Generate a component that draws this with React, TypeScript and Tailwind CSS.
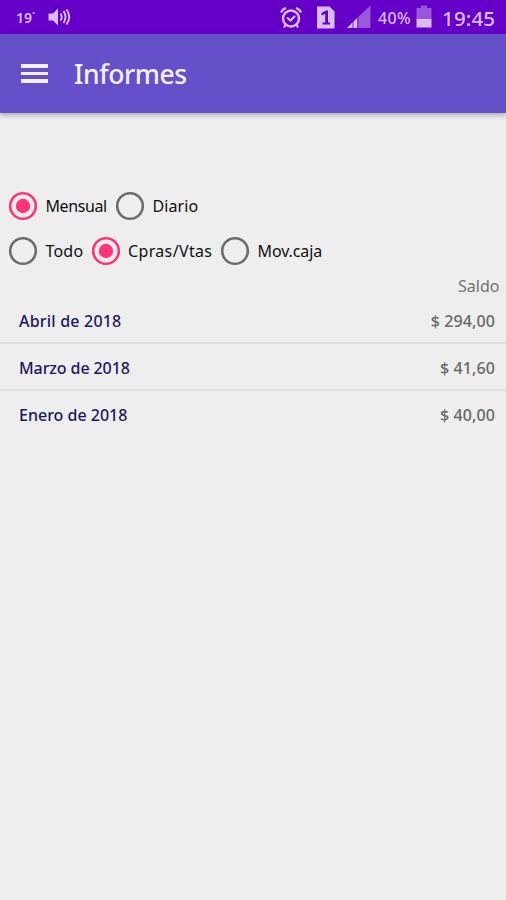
import { useState } from 'react';

interface Option {
  id: string;
  label: string;
  width: string;
  tracking: string;
}

const periods: Option[] = [
  { id: 'mensual', label: 'Mensual', width: 'w-[107px]', tracking: 'tracking-[-0.4px]' },
  { id: 'diario', label: 'Diario', width: 'w-[100px]', tracking: 'tracking-[0.1px]' },
];

const kinds: Option[] = [
  { id: 'todo', label: 'Todo', width: 'w-[82.5px]', tracking: 'tracking-[0.2px]' },
  { id: 'cpras', label: 'Cpras/Vtas', width: 'w-[129.5px]', tracking: 'tracking-[0.35px]' },
  { id: 'caja', label: 'Mov.caja', width: 'w-[110px]', tracking: 'tracking-[-0.1px]' },
];

const rows = [
  { month: 'Abril de 2018', amount: '$ 294,00', tracking: 'tracking-[0.2px]' },
  { month: 'Marzo de 2018', amount: '$ 41,60', tracking: 'tracking-[-0.1px]' },
  { month: 'Enero de 2018', amount: '$ 40,00', tracking: 'tracking-[0px]' },
];

function StatusBar() {
  return (
    <div className="flex h-[34px] items-center bg-[#6400c8] text-[#d9bdf3]">
      <span className="ml-4 mt-[2px] w-[32px] text-[14px] font-semibold leading-none">19˙</span>
      {/* volume */}
      <svg width="24" height="20" viewBox="0 0 24 20" fill="none">
        <path d="M0.5 6.5H5L10 1.5V18.5L5 13.5H0.5Z" fill="currentColor" />
        <path
          d="M12.5 6.5Q15 10 12.5 13.5M15.5 4Q19.5 10 15.5 16M18.5 2.5Q24 10 18.5 17.5"
          stroke="currentColor"
          strokeWidth="1.9"
        />
      </svg>

      <div className="ml-auto flex items-center pr-[11px]">
        {/* alarm */}
        <svg width="22" height="24" viewBox="0 0 22 24" fill="none" stroke="currentColor">
          <circle cx="11" cy="13.5" r="8" strokeWidth="2.4" />
          <path d="M7 12.5L10.5 15.5L15 11" strokeWidth="2.1" />
          <path d="M1 7.5Q2.5 4 6 3M21 7.5Q19.5 4 16 3M5.5 19.5L4 22.5M16.5 19.5L18 22.5" strokeWidth="2.2" />
        </svg>
        {/* sim card */}
        <svg className="ml-[14.5px]" width="18" height="23" viewBox="0 0 18 23">
          <path d="M0 0.5H12.5L17.5 5.5V22.5H0Z" fill="currentColor" />
          <path d="M4.5 7L9 4.5H11V16.5H13V18.5H5.5V16.5H8.2V8L4.5 9.5Z" fill="#6400c8" />
        </svg>
        {/* signal */}
        <svg className="ml-[12px]" width="24" height="24" viewBox="0 0 24 24">
          <path d="M10.5 12.5L23.5 0.5V23H10.5Z" fill="#9b57da" />
          <path d="M0 23L10.5 12.5V23Z" fill="currentColor" />
          <path d="M6 14V23M10.8 11V23" stroke="#6400c8" strokeWidth="0.8" />
        </svg>
        <span className="ml-[7.5px] mt-[2px] w-[38px] text-[16px] font-medium leading-none tracking-[0.3px]">40%</span>
        {/* battery */}
        <svg width="16" height="24" viewBox="0 0 16 24">
          <path d="M5 0.5H11V3H15.5V14H0.5V3H5Z" fill="#9b57da" />
          <rect x="0.5" y="14" width="15" height="8.5" fill="currentColor" />
        </svg>
        <span className="ml-[10px] mt-[2px] w-[53px] text-[20.5px] font-medium leading-none tracking-[0.15px]">19:45</span>
      </div>
    </div>
  );
}

function Radio({ option, checked, onSelect }: { option: Option; checked: boolean; onSelect: () => void }) {
  return (
    <button
      type="button"
      role="radio"
      aria-checked={checked}
      onClick={onSelect}
      className={`flex shrink-0 items-center ${option.width}`}
    >
      <svg className="shrink-0" width="30" height="30" viewBox="0 0 30 30" fill="none">
        <circle cx="15" cy="15" r="12.8" stroke={checked ? '#ff3377' : '#6c6c6c'} strokeWidth="2.6" />
        {checked && <circle cx="15" cy="15" r="7.2" fill="#ff3377" />}
      </svg>
      <span className={`ml-[7.5px] mt-px whitespace-nowrap text-[16px] leading-6 text-[#101010] ${option.tracking}`}>
        {option.label}
      </span>
    </button>
  );
}

export default function App() {
  const [period, setPeriod] = useState('mensual');
  const [kind, setKind] = useState('cpras');

  return (
    <div className="h-[900px] w-[506px] overflow-hidden bg-[#eeeeee] font-['Noto_Sans','Open_Sans',sans-serif]">
      <StatusBar />

      <header className="flex h-[79px] items-center bg-[#6650ca] text-[#f4f0ff] shadow-[0_2px_5px_rgba(0,0,0,0.3)]">
        <button type="button" aria-label="Menú" className="ml-[21px] flex w-[27px] flex-col gap-[4px]">
          <span className="h-[3.5px] bg-current" />
          <span className="h-[3.5px] bg-current" />
          <span className="h-[3.5px] bg-current" />
        </button>
        <h1 className="ml-[26px] mt-[2px] text-[26.5px] font-medium leading-none tracking-[-0.4px]">Informes</h1>
      </header>

      <main className="pt-[70px]">
        <div role="radiogroup" className="flex h-[45px] items-center pl-[8px]">
          {periods.map((o) => (
            <Radio key={o.id} option={o} checked={period === o.id} onSelect={() => setPeriod(o.id)} />
          ))}
        </div>
        <div role="radiogroup" className="flex h-[45px] items-center pl-[8px]">
          {kinds.map((o) => (
            <Radio key={o.id} option={o} checked={kind === o.id} onSelect={() => setKind(o.id)} />
          ))}
        </div>

        <div className="flex h-[24px] items-center justify-end pr-[6.5px] pt-[2px] text-[16px] text-[#737373]">Saldo</div>

        <ul>
          {rows.map((r) => (
            <li
              key={r.month}
              className="flex h-[47px] items-center justify-between border-b-2 border-[#e0e0e0] pl-[19px] pr-[11px] pt-[3px] text-[16px] font-medium last:border-transparent"
            >
              <span className={`text-[#1c1760] ${r.tracking}`}>{r.month}</span>
              <span className="tracking-[0.1px] text-[#686868]">{r.amount}</span>
            </li>
          ))}
        </ul>
      </main>
    </div>
  );
}
